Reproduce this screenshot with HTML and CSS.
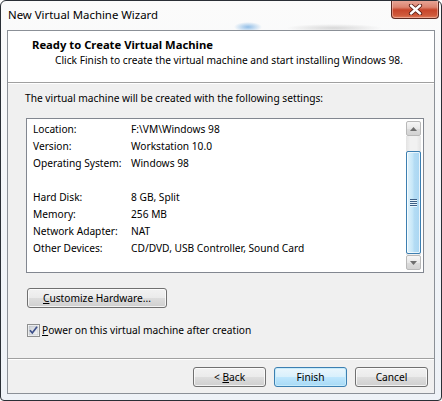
FILE: index.html
```html
<!DOCTYPE html>
<html>
<head>
<meta charset="utf-8">
<link rel="stylesheet" href="styles.css">
</head>
<body>
<div class="window">
  <div class="titlebar">
    <span class="title">New Virtual Machine Wizard</span>
    <div class="close">
      <svg width="15" height="11" viewBox="0 0 15 11">
        <path d="M3 1.5 L12 9.5 M12 1.5 L3 9.5" stroke="#5a1d14" stroke-width="4.2" stroke-linecap="round"/>
        <path d="M3 1.5 L12 9.5 M12 1.5 L3 9.5" stroke="#ffffff" stroke-width="2.4" stroke-linecap="round"/>
      </svg>
    </div>
  </div>
  <div class="client">
    <div class="header">
      <div class="h-title">Ready to Create Virtual Machine</div>
      <div class="h-sub">Click Finish to create the virtual machine and start installing Windows 98.</div>
    </div>
    <div class="content">
      <div class="intro">The virtual machine will be created with the following settings:</div>
      <div class="listbox">
        <div class="rows">
          <div class="row"><span class="lbl">Location:</span><span>F:\VM\Windows 98</span></div>
          <div class="row"><span class="lbl">Version:</span><span>Workstation 10.0</span></div>
          <div class="row"><span class="lbl">Operating System:</span><span>Windows 98</span></div>
          <div class="row"></div>
          <div class="row"><span class="lbl">Hard Disk:</span><span>8 GB, Split</span></div>
          <div class="row"><span class="lbl">Memory:</span><span>256 MB</span></div>
          <div class="row"><span class="lbl">Network Adapter:</span><span>NAT</span></div>
          <div class="row"><span class="lbl">Other Devices:</span><span>CD/DVD, USB Controller, Sound Card</span></div>
        </div>
        <div class="scrollbar">
          <div class="sb-btn">
            <svg width="7" height="4" viewBox="0 0 7 4"><path d="M0 4 L3.5 0 L7 4 Z" fill="#6d6d6d"/></svg>
          </div>
          <div class="sb-track">
            <div class="thumb">
              <svg width="7" height="8" viewBox="0 0 7 8">
                <rect x="0" y="0" width="7" height="1" fill="#3c5f86"/>
                <rect x="0" y="1" width="7" height="1" fill="#e8f4fc"/>
                <rect x="0" y="2" width="7" height="1" fill="#3c5f86"/>
                <rect x="0" y="3" width="7" height="1" fill="#e8f4fc"/>
                <rect x="0" y="4" width="7" height="1" fill="#3c5f86"/>
                <rect x="0" y="5" width="7" height="1" fill="#e8f4fc"/>
                <rect x="0" y="6" width="7" height="1" fill="#3c5f86"/>
                <rect x="0" y="7" width="7" height="1" fill="#e8f4fc"/>
              </svg>
            </div>
          </div>
          <div class="sb-btn">
            <svg width="7" height="4" viewBox="0 0 7 4"><path d="M0 0 L7 0 L3.5 4 Z" fill="#6d6d6d"/></svg>
          </div>
        </div>
      </div>
      <div class="btn btn-wide"><u>C</u>ustomize Hardware...</div>
      <div class="check-row">
        <svg class="checkbox" width="13" height="13" viewBox="0 0 13 13">
          <defs>
            <linearGradient id="cbg" x1="0" y1="0" x2="1" y2="1">
              <stop offset="0" stop-color="#cbcfd5"/>
              <stop offset="1" stop-color="#f6f6f6"/>
            </linearGradient>
          </defs>
          <rect x="0.5" y="0.5" width="12" height="12" fill="#ffffff" stroke="#8e8f8f"/>
          <rect x="2" y="2" width="9" height="9" fill="url(#cbg)" stroke="#b3b8bf" stroke-width="0.6"/>
          <path d="M3 6.2 L5.3 9 L10 2.8" fill="none" stroke="#3c4f8a" stroke-width="1.7"/>
        </svg>
        <span class="check-label"><u>P</u>ower on this virtual machine after creation</span>
      </div>
    </div>
    <div class="footer">
      <div class="btn"><span>&lt; <u>B</u>ack</span></div>
      <div class="btn btn-default">Finish</div>
      <div class="btn">Cancel</div>
    </div>
  </div>
</div>
</body>
</html>
```
FILE: styles.css
```css
html, body {
  margin: 0;
  padding: 0;
  background: #ffffff;
}
body {
  font-family: "Noto Sans", "DejaVu Sans", sans-serif;
  font-size: 10.2px;
  color: #000;
}
.window {
  width: 442px;
  height: 401px;
  box-sizing: border-box;
  border: 1px solid #2a2f36;
  border-radius: 6px 6px 4px 4px;
  background:
    radial-gradient(ellipse 14px 5px at 247px 26px, rgba(110, 170, 225, 0.75), rgba(110, 170, 225, 0) 100%),
    radial-gradient(ellipse 48px 4px at 333px 27px, rgba(150, 150, 150, 0.35), rgba(150, 150, 150, 0) 100%),
    linear-gradient(#fbfbfb, #f1f4f8 60%, #eef2f7);
  padding: 0 6px 6px 6px;
  display: flex;
  flex-direction: column;
  overflow: hidden;
}
.titlebar {
  height: 29px;
  position: relative;
  display: flex;
  align-items: flex-start;
}
.title {
  font-size: 11.4px;
  line-height: 14px;
  padding-top: 7px;
  padding-left: 1px;
  color: #000;
}
.close {
  position: absolute;
  top: -1px;
  right: -4px;
  width: 48px;
  height: 19px;
  box-sizing: border-box;
  border: 1px solid #5b2a22;
  border-top: none;
  border-radius: 0 0 4px 4px;
  background: linear-gradient(#e9a99b 0%, #dc8470 40%, #c7452b 55%, #cf5a3c 85%, #e07d5c 100%);
  box-shadow: inset 0 0 0 1px rgba(255, 220, 210, 0.45);
  display: flex;
  align-items: center;
  justify-content: center;
}
.client {
  flex: 1;
  border: 1px solid #8b9097;
  background: #f0f0f0;
  display: flex;
  flex-direction: column;
}
.header {
  height: 51px;
  background: #ffffff;
  border-bottom: 1px solid #a0a0a0;
  box-shadow: 0 1px 0 #ffffff;
  box-sizing: content-box;
}
.h-title {
  font-weight: bold;
  font-size: 11.25px;
  line-height: 15px;
  margin-top: 6px;
  padding-left: 24px;
}
.h-sub {
  line-height: 15px;
  margin-top: 1px;
  padding-left: 47px;
}
.content {
  flex: 1;
  display: flex;
  flex-direction: column;
  align-items: flex-start;
  padding: 1px 10px 0 18px;
}
.intro {
  line-height: 15px;
  margin-top: 7px;
  margin-left: -1px;
}
.listbox {
  margin-top: 12px;
  width: 398px;
  height: 155px;
  box-sizing: border-box;
  border: 1px solid #828790;
  background: #ffffff;
  display: flex;
}
.rows {
  flex: 1;
  padding: 2px 0 0 6px;
}
.row {
  height: 17px;
  line-height: 17px;
  display: flex;
  white-space: nowrap;
}
.lbl {
  width: 98px;
  flex: none;
}
.scrollbar {
  width: 15px;
  padding: 2px 2px 2px 0;
  display: flex;
  flex-direction: column;
}
.sb-btn {
  height: 15px;
  box-sizing: border-box;
  border: 1px solid #b9b9b9;
  border-radius: 2px;
  background: linear-gradient(#f6f6f6, #e8e8e8 50%, #dcdcdc 51%, #d3d3d3);
  display: flex;
  align-items: center;
  justify-content: center;
}
.sb-track {
  flex: 1;
  background: linear-gradient(90deg, #e3e3e3, #f1f1f1 30%, #f1f1f1 70%, #e3e3e3);
  display: flex;
  flex-direction: column;
  padding-top: 15px;
  padding-bottom: 1px;
}
.thumb {
  flex: 1;
  box-sizing: border-box;
  border: 1px solid #3c7fb1;
  border-radius: 2px;
  background: linear-gradient(90deg, #e3f4fc, #c4e6f8 45%, #b4dcf4 55%, #a9d6f2);
  box-shadow: inset 0 0 0 1px rgba(255, 255, 255, 0.7);
  display: flex;
  align-items: center;
  justify-content: center;
}
.btn {
  height: 20px;
  width: 73px;
  box-sizing: border-box;
  border: 1px solid #707070;
  border-radius: 3px;
  background: linear-gradient(#f2f2f2 0%, #ebebeb 48%, #dddddd 52%, #cfcfcf 100%);
  box-shadow: inset 0 0 0 1px rgba(255, 255, 255, 0.75);
  display: flex;
  align-items: center;
  justify-content: center;
  line-height: 14px;
  white-space: nowrap;
  flex: none;
}
.btn u, .check-label u {
  text-decoration-thickness: 1px;
  text-underline-offset: 1px;
}
.btn-wide {
  width: 140px;
  margin-top: 15px;
  margin-left: 1px;
}
.btn-default {
  border-color: #3c7fb1;
  background: linear-gradient(#eaf6fd 0%, #d9f0fc 48%, #bee6fd 52%, #a7d9f5 100%);
  box-shadow: inset 0 0 0 1px #c6ebfb;
}
.check-row {
  margin-top: 15px;
  margin-left: 1px;
  display: flex;
  align-items: center;
  height: 14px;
}
.checkbox {
  flex: none;
}
.check-label {
  margin-left: 2px;
  line-height: 14px;
}
.footer {
  height: 34px;
  border-top: 1px solid #a0a0a0;
  box-shadow: inset 0 1px 0 #ffffff;
  box-sizing: content-box;
  display: flex;
  justify-content: flex-end;
  align-items: flex-start;
  gap: 8px;
  padding: 0 6px 0 0;
}
.footer .btn {
  margin-top: 8px;
}
```
